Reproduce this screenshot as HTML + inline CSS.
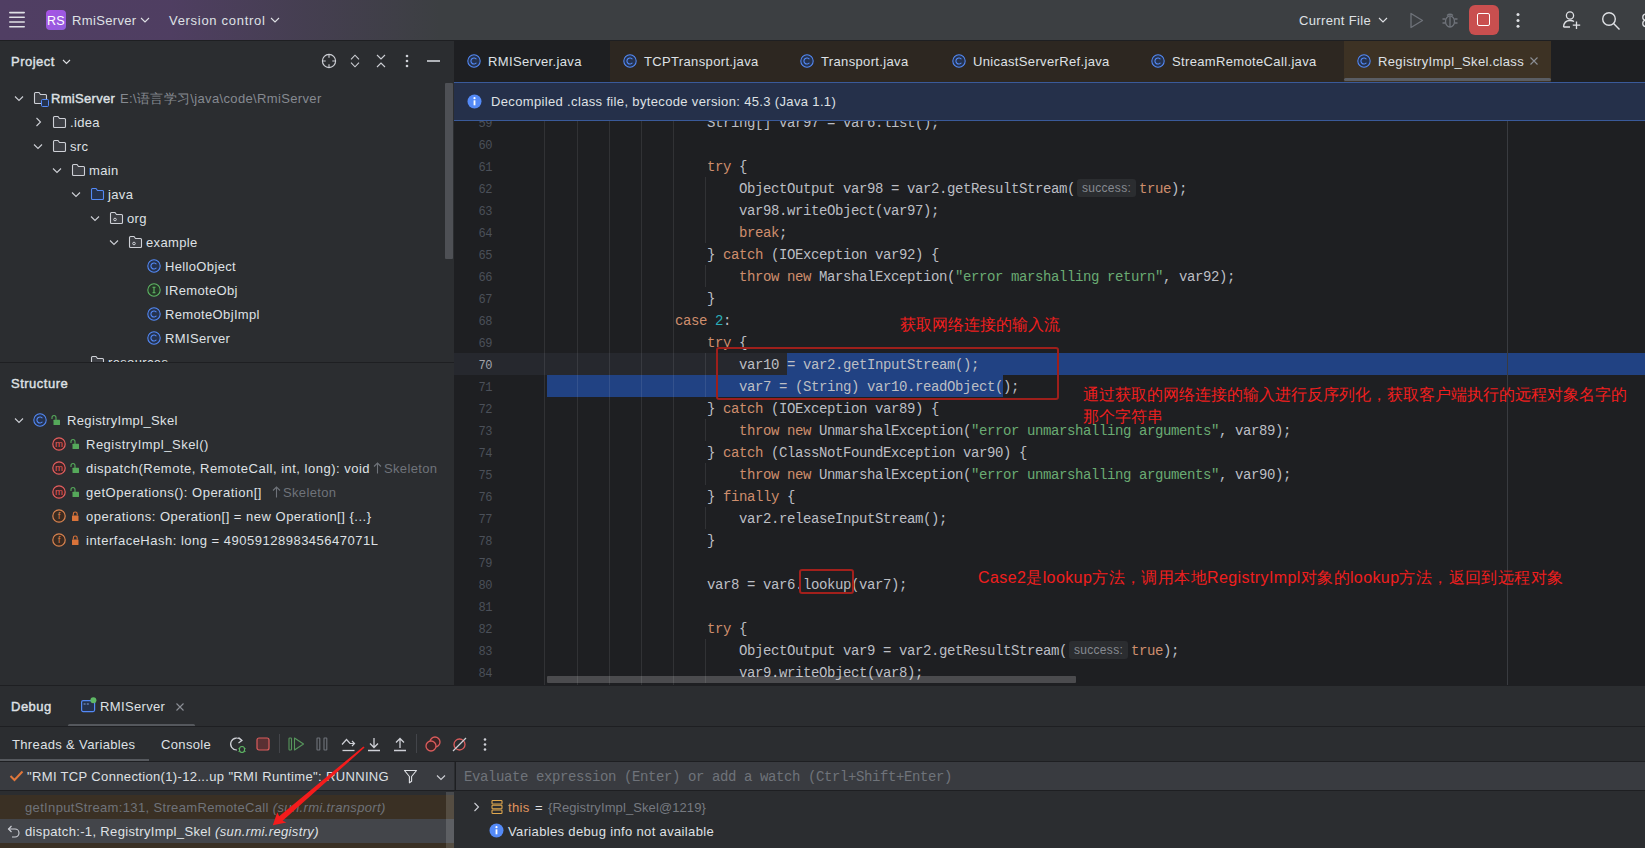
<!DOCTYPE html>
<html><head><meta charset="utf-8"><style>
html,body{margin:0;padding:0;}
body{width:1645px;height:848px;overflow:hidden;position:relative;background:#2b2d30;font-family:"Liberation Sans", sans-serif;}
.t{position:absolute;white-space:pre;font-family:"Liberation Sans", sans-serif;letter-spacing:0.35px}
.m{position:absolute;white-space:pre;font-family:"Liberation Mono", monospace;font-size:14px;letter-spacing:-0.4px}
</style></head><body>
<div style="position:absolute;left:0;top:0;width:1645px;height:40px;background:#3c3f42"></div>
<div style="position:absolute;left:0;top:0;width:900px;height:40px;background:linear-gradient(90deg, rgba(80,62,99,1) 0px, rgba(80,62,99,0.95) 170px, rgba(80,62,99,0.5) 290px, rgba(80,62,99,0) 440px)"></div>
<div style="position:absolute;left:0px;top:40px;width:1645px;height:1px;background:#1e1f22;"></div>
<svg style="position:absolute;left:8px;top:10px;" width="18" height="20" viewBox="0 0 18 20" fill="none"><rect x="1" y="1.8" width="16" height="1.6" rx="0.8" fill="#dfe1e5"/><rect x="1" y="6.5" width="16" height="1.6" rx="0.8" fill="#dfe1e5"/><rect x="1" y="11.2" width="16" height="1.6" rx="0.8" fill="#dfe1e5"/><rect x="1" y="15.9" width="16" height="1.6" rx="0.8" fill="#dfe1e5"/></svg>
<div style="position:absolute;left:46px;top:10px;width:20px;height:20px;border-radius:4px;background:linear-gradient(135deg,#a853e6,#915ddb);"></div>
<div class="t" style="left:46px;top:11.0px;height:20px;line-height:20px;color:#ffffff;font-size:12.5px;font-weight:normal;width:20px;text-align:center;letter-spacing:0.2px">RS</div>
<div class="t" style="left:72px;top:11.0px;height:20px;line-height:20px;color:#dfe1e5;font-size:13px;font-weight:normal;">RmiServer</div>
<svg style="position:absolute;left:140px;top:17.0px;" width="10" height="6" viewBox="0 0 10 6" fill="none"><path d="M1 1 L5 5 L9 1" stroke="#dfe1e5" stroke-width="1.1"/></svg>
<div class="t" style="left:169px;top:11.0px;height:20px;line-height:20px;color:#dfe1e5;font-size:13px;font-weight:normal;letter-spacing:0.7px">Version control</div>
<svg style="position:absolute;left:270px;top:17.0px;" width="10" height="6" viewBox="0 0 10 6" fill="none"><path d="M1 1 L5 5 L9 1" stroke="#dfe1e5" stroke-width="1.1"/></svg>
<div class="t" style="left:1299px;top:11.0px;height:20px;line-height:20px;color:#dfe1e5;font-size:13px;font-weight:normal;">Current File</div>
<svg style="position:absolute;left:1378px;top:17.0px;" width="10" height="6" viewBox="0 0 10 6" fill="none"><path d="M1 1 L5 5 L9 1" stroke="#dfe1e5" stroke-width="1.1"/></svg>
<svg style="position:absolute;left:1408px;top:12px;" width="17" height="17" viewBox="0 0 17 17" fill="none"><path d="M3 1.5 L14.5 8.5 L3 15.5 Z" stroke="#6f737a" stroke-width="1.3" stroke-linejoin="round"/></svg>
<svg style="position:absolute;left:1441px;top:11px;" width="18" height="18" viewBox="0 0 18 18" fill="none"><ellipse cx="9" cy="10.5" rx="4.5" ry="5.5" stroke="#6f737a" stroke-width="1.3"/><path d="M6 4.5 Q9 2 12 4.5 M1.5 8h3 M13.5 8h3 M1.5 12h3 M13.5 12h3 M9 6v10" stroke="#6f737a" stroke-width="1.3"/></svg>
<div style="position:absolute;left:1469px;top:5px;width:30px;height:30px;border-radius:6px;background:#c94f4f"></div>
<div style="position:absolute;left:1477px;top:13px;width:11px;height:11px;border:1.6px solid #ffffff;border-radius:2px"></div>
<svg style="position:absolute;left:1515px;top:12px;" width="6" height="17" viewBox="0 0 6 17" fill="none"><circle cx="3" cy="2.5" r="1.5" fill="#dfe1e5"/><circle cx="3" cy="8.5" r="1.5" fill="#dfe1e5"/><circle cx="3" cy="14.3" r="1.5" fill="#dfe1e5"/></svg>
<svg style="position:absolute;left:1562px;top:10px;" width="20" height="20" viewBox="0 0 20 20" fill="none"><circle cx="8" cy="5.5" r="3.6" stroke="#dfe1e5" stroke-width="1.3"/><path d="M1.5 17 Q2 10.5 8 10.5 Q10.5 10.5 12 11.5" stroke="#dfe1e5" stroke-width="1.3"/><path d="M1.5 17 H8 M14.5 11.5 V19 M10.8 15.2 H18.2" stroke="#dfe1e5" stroke-width="1.3"/></svg>
<svg style="position:absolute;left:1601px;top:11px;" width="20" height="20" viewBox="0 0 20 20" fill="none"><circle cx="8" cy="8" r="6.3" stroke="#dfe1e5" stroke-width="1.4"/><path d="M12.6 12.6 L18.5 18.5" stroke="#dfe1e5" stroke-width="1.4"/></svg>
<svg style="position:absolute;left:1638px;top:8px;" width="8" height="24" viewBox="0 0 8 24" fill="none"><circle cx="8" cy="9.2" r="3.2" stroke="#dfe1e5" stroke-width="1.3"/><circle cx="8" cy="15.5" r="3.2" stroke="#dfe1e5" stroke-width="1.3"/></svg>
<div style="position:absolute;left:0px;top:41px;width:454px;height:644px;background:#2b2d30;"></div>
<div class="t" style="left:11px;top:52.0px;height:20px;line-height:20px;color:#dfe1e5;font-size:13px;font-weight:normal;letter-spacing:0.5px;-webkit-text-stroke:0.4px #dfe1e5">Project</div>
<svg style="position:absolute;left:61.5px;top:59.25px;" width="9.0" height="5.5" viewBox="0 0 9.0 5.5" fill="none"><path d="M1 1 L4.5 4.5 L8.0 1" stroke="#dfe1e5" stroke-width="1.1"/></svg>
<svg style="position:absolute;left:321px;top:53px;" width="16" height="16" viewBox="0 0 16 16" fill="none"><circle cx="8" cy="8" r="6.6" stroke="#ced0d6" stroke-width="1.15"/><path d="M8 1.5v3.2 M8 11.3v3.2 M1.5 8h3.2 M11.3 8h3.2" stroke="#ced0d6" stroke-width="1.1"/></svg>
<svg style="position:absolute;left:349px;top:53px;" width="12" height="16" viewBox="0 0 12 16" fill="none"><path d="M2 6.3 L6 2.2 L10 6.3 M2 9.7 L6 13.8 L10 9.7" stroke="#ced0d6" stroke-width="1.1"/></svg>
<svg style="position:absolute;left:375px;top:53px;" width="12" height="16" viewBox="0 0 12 16" fill="none"><path d="M2 2 L6 6 L10 2 M2 14 L6 10 L10 14" stroke="#ced0d6" stroke-width="1.1"/></svg>
<svg style="position:absolute;left:404px;top:53px;" width="6" height="16" viewBox="0 0 6 16" fill="none"><circle cx="3" cy="3" r="1.3" fill="#ced0d6"/><circle cx="3" cy="8" r="1.3" fill="#ced0d6"/><circle cx="3" cy="13" r="1.3" fill="#ced0d6"/></svg>
<div style="position:absolute;left:427px;top:60.4px;width:12.5px;height:1.3px;background:#b0b3b8;"></div>
<svg style="position:absolute;left:14px;top:95px;" width="10" height="7" viewBox="0 0 10 7" fill="none"><path d="M1 1.5 L5 5.5 L9 1.5" stroke="#ced0d6" stroke-width="1.1"/></svg>
<svg style="position:absolute;left:33px;top:91px;" width="15" height="14" viewBox="0 0 15 14" fill="none"><path d="M1.5 2.5 Q1.5 1.5 2.5 1.5 H6 L7.5 3.5 H12.5 Q13.5 3.5 13.5 4.5 V11.5 Q13.5 12.5 12.5 12.5 H2.5 Q1.5 12.5 1.5 11.5 Z" stroke="#ced0d6" stroke-width="1.1" fill="#3c3e43"/></svg>
<div style="position:absolute;left:41px;top:99px;width:6px;height:6px;border:1.2px solid #548af7;border-radius:1.5px;background:#25324d"></div>
<div class="t" style="left:51px;top:89.0px;height:20px;line-height:20px;color:#dfe1e5;font-size:13px;font-weight:normal;letter-spacing:0.3px;-webkit-text-stroke:0.4px #dfe1e5">RmiServer</div>
<div class="t" style="left:120px;top:89.0px;height:20px;line-height:20px;color:#868a91;font-size:13px;font-weight:normal;">E:\语言学习\java\code\RmiServer</div>
<svg style="position:absolute;left:35px;top:117px;" width="7" height="10" viewBox="0 0 7 10" fill="none"><path d="M1.5 1 L5.5 5 L1.5 9" stroke="#ced0d6" stroke-width="1.1"/></svg>
<svg style="position:absolute;left:52px;top:115px;" width="15" height="14" viewBox="0 0 15 14" fill="none"><path d="M1.5 2.5 Q1.5 1.5 2.5 1.5 H6 L7.5 3.5 H12.5 Q13.5 3.5 13.5 4.5 V11.5 Q13.5 12.5 12.5 12.5 H2.5 Q1.5 12.5 1.5 11.5 Z" stroke="#ced0d6" stroke-width="1.1" fill="#3c3e43"/></svg>
<div class="t" style="left:70px;top:113.0px;height:20px;line-height:20px;color:#dfe1e5;font-size:13px;font-weight:normal;">.idea</div>
<svg style="position:absolute;left:33px;top:143px;" width="10" height="7" viewBox="0 0 10 7" fill="none"><path d="M1 1.5 L5 5.5 L9 1.5" stroke="#ced0d6" stroke-width="1.1"/></svg>
<svg style="position:absolute;left:52px;top:139px;" width="15" height="14" viewBox="0 0 15 14" fill="none"><path d="M1.5 2.5 Q1.5 1.5 2.5 1.5 H6 L7.5 3.5 H12.5 Q13.5 3.5 13.5 4.5 V11.5 Q13.5 12.5 12.5 12.5 H2.5 Q1.5 12.5 1.5 11.5 Z" stroke="#ced0d6" stroke-width="1.1" fill="#3c3e43"/></svg>
<div class="t" style="left:70px;top:137.0px;height:20px;line-height:20px;color:#dfe1e5;font-size:13px;font-weight:normal;">src</div>
<svg style="position:absolute;left:52px;top:167px;" width="10" height="7" viewBox="0 0 10 7" fill="none"><path d="M1 1.5 L5 5.5 L9 1.5" stroke="#ced0d6" stroke-width="1.1"/></svg>
<svg style="position:absolute;left:71px;top:163px;" width="15" height="14" viewBox="0 0 15 14" fill="none"><path d="M1.5 2.5 Q1.5 1.5 2.5 1.5 H6 L7.5 3.5 H12.5 Q13.5 3.5 13.5 4.5 V11.5 Q13.5 12.5 12.5 12.5 H2.5 Q1.5 12.5 1.5 11.5 Z" stroke="#ced0d6" stroke-width="1.1" fill="#3c3e43"/></svg>
<div class="t" style="left:89px;top:161.0px;height:20px;line-height:20px;color:#dfe1e5;font-size:13px;font-weight:normal;">main</div>
<svg style="position:absolute;left:71px;top:191px;" width="10" height="7" viewBox="0 0 10 7" fill="none"><path d="M1 1.5 L5 5.5 L9 1.5" stroke="#ced0d6" stroke-width="1.1"/></svg>
<svg style="position:absolute;left:90px;top:187px;" width="15" height="14" viewBox="0 0 15 14" fill="none"><path d="M1.5 2.5 Q1.5 1.5 2.5 1.5 H6 L7.5 3.5 H12.5 Q13.5 3.5 13.5 4.5 V11.5 Q13.5 12.5 12.5 12.5 H2.5 Q1.5 12.5 1.5 11.5 Z" stroke="#548af7" stroke-width="1.1" fill="#25324d"/></svg>
<div class="t" style="left:108px;top:185.0px;height:20px;line-height:20px;color:#dfe1e5;font-size:13px;font-weight:normal;">java</div>
<svg style="position:absolute;left:90px;top:215px;" width="10" height="7" viewBox="0 0 10 7" fill="none"><path d="M1 1.5 L5 5.5 L9 1.5" stroke="#ced0d6" stroke-width="1.1"/></svg>
<svg style="position:absolute;left:109px;top:211px;" width="15" height="14" viewBox="0 0 15 14" fill="none"><path d="M1.5 2.5 Q1.5 1.5 2.5 1.5 H6 L7.5 3.5 H12.5 Q13.5 3.5 13.5 4.5 V11.5 Q13.5 12.5 12.5 12.5 H2.5 Q1.5 12.5 1.5 11.5 Z" stroke="#ced0d6" stroke-width="1.1" fill="#3c3e43"/><circle cx="6" cy="8.5" r="1.3" stroke="#ced0d6" stroke-width="1"/></svg>
<div class="t" style="left:127px;top:209.0px;height:20px;line-height:20px;color:#dfe1e5;font-size:13px;font-weight:normal;">org</div>
<svg style="position:absolute;left:109px;top:239px;" width="10" height="7" viewBox="0 0 10 7" fill="none"><path d="M1 1.5 L5 5.5 L9 1.5" stroke="#ced0d6" stroke-width="1.1"/></svg>
<svg style="position:absolute;left:128px;top:235px;" width="15" height="14" viewBox="0 0 15 14" fill="none"><path d="M1.5 2.5 Q1.5 1.5 2.5 1.5 H6 L7.5 3.5 H12.5 Q13.5 3.5 13.5 4.5 V11.5 Q13.5 12.5 12.5 12.5 H2.5 Q1.5 12.5 1.5 11.5 Z" stroke="#ced0d6" stroke-width="1.1" fill="#3c3e43"/><circle cx="6" cy="8.5" r="1.3" stroke="#ced0d6" stroke-width="1"/></svg>
<div class="t" style="left:146px;top:233.0px;height:20px;line-height:20px;color:#dfe1e5;font-size:13px;font-weight:normal;">example</div>
<svg style="position:absolute;left:147px;top:259px;" width="14" height="14" viewBox="0 0 14 14" fill="none"><circle cx="7" cy="7" r="6.2" stroke="#548af7" stroke-width="1.05" fill="#25324d"/><path d="M9.4 5.3 A3 3 0 1 0 9.4 8.7" stroke="#548af7" stroke-width="1.1"/></svg>
<div class="t" style="left:165px;top:257.0px;height:20px;line-height:20px;color:#dfe1e5;font-size:13px;font-weight:normal;">HelloObject</div>
<svg style="position:absolute;left:147px;top:283px;" width="14" height="14" viewBox="0 0 14 14" fill="none"><circle cx="7" cy="7" r="6.2" stroke="#5fb865" stroke-width="1.05" fill="#253627"/><path d="M5.5 4.3h3 M7 4.3v5.4 M5.5 9.7h3" stroke="#5fb865" stroke-width="1.1"/></svg>
<div class="t" style="left:165px;top:281.0px;height:20px;line-height:20px;color:#dfe1e5;font-size:13px;font-weight:normal;">IRemoteObj</div>
<svg style="position:absolute;left:147px;top:307px;" width="14" height="14" viewBox="0 0 14 14" fill="none"><circle cx="7" cy="7" r="6.2" stroke="#548af7" stroke-width="1.05" fill="#25324d"/><path d="M9.4 5.3 A3 3 0 1 0 9.4 8.7" stroke="#548af7" stroke-width="1.1"/></svg>
<div class="t" style="left:165px;top:305.0px;height:20px;line-height:20px;color:#dfe1e5;font-size:13px;font-weight:normal;">RemoteObjImpl</div>
<svg style="position:absolute;left:147px;top:331px;" width="14" height="14" viewBox="0 0 14 14" fill="none"><circle cx="7" cy="7" r="6.2" stroke="#548af7" stroke-width="1.05" fill="#25324d"/><path d="M9.4 5.3 A3 3 0 1 0 9.4 8.7" stroke="#548af7" stroke-width="1.1"/></svg>
<div class="t" style="left:165px;top:329.0px;height:20px;line-height:20px;color:#dfe1e5;font-size:13px;font-weight:normal;">RMIServer</div>
<svg style="position:absolute;left:90px;top:355px;" width="15" height="14" viewBox="0 0 15 14" fill="none"><path d="M1.5 2.5 Q1.5 1.5 2.5 1.5 H6 L7.5 3.5 H12.5 Q13.5 3.5 13.5 4.5 V11.5 Q13.5 12.5 12.5 12.5 H2.5 Q1.5 12.5 1.5 11.5 Z" stroke="#ced0d6" stroke-width="1.1" fill="#3c3e43"/></svg>
<div class="t" style="left:108px;top:353.0px;height:20px;line-height:20px;color:#dfe1e5;font-size:13px;font-weight:normal;">resources</div>
<div style="position:absolute;left:0px;top:362px;width:454px;height:1px;background:#1e1f22;"></div>
<div style="position:absolute;left:0px;top:363px;width:454px;height:322px;background:#2b2d30;"></div>
<div style="position:absolute;left:445px;top:83px;width:8px;height:176px;background:#4e5055;border-radius:1px"></div>
<div class="t" style="left:11px;top:374.0px;height:20px;line-height:20px;color:#dfe1e5;font-size:13px;font-weight:normal;letter-spacing:0.5px;-webkit-text-stroke:0.4px #dfe1e5">Structure</div>
<svg style="position:absolute;left:14px;top:417px;" width="10" height="7" viewBox="0 0 10 7" fill="none"><path d="M1 1.5 L5 5.5 L9 1.5" stroke="#ced0d6" stroke-width="1.1"/></svg>
<svg style="position:absolute;left:33px;top:413px;" width="14" height="14" viewBox="0 0 14 14" fill="none"><circle cx="7" cy="7" r="6.2" stroke="#548af7" stroke-width="1.05" fill="#25324d"/><path d="M9.4 5.3 A3 3 0 1 0 9.4 8.7" stroke="#548af7" stroke-width="1.1"/></svg>
<svg style="position:absolute;left:51px;top:414px;" width="10" height="12" viewBox="0 0 10 12" fill="none"><rect x="2.5" y="5.8" width="6.5" height="5.2" rx="0.5" fill="#55a85a"/><path d="M1 5 V3.6 Q1 1.5 3 1.5 Q5 1.5 5 3.6 V6" stroke="#55a85a" stroke-width="1.1"/></svg>
<div class="t" style="left:67px;top:411.0px;height:20px;line-height:20px;color:#dfe1e5;font-size:13px;font-weight:normal;">RegistryImpl_Skel</div>
<svg style="position:absolute;left:52px;top:437px;" width="14" height="14" viewBox="0 0 14 14" fill="none"><circle cx="7" cy="7" r="6.2" stroke="#e55f5f" stroke-width="1.2" fill="#3b2325"/><text x="7" y="10" text-anchor="middle" font-family="Liberation Sans" font-size="9.5" fill="#e55f5f">m</text></svg>
<svg style="position:absolute;left:70px;top:438px;" width="10" height="12" viewBox="0 0 10 12" fill="none"><rect x="2.5" y="5.8" width="6.5" height="5.2" rx="0.5" fill="#55a85a"/><path d="M1 5 V3.6 Q1 1.5 3 1.5 Q5 1.5 5 3.6 V6" stroke="#55a85a" stroke-width="1.1"/></svg>
<div class="t" style="left:86px;top:435.0px;height:20px;line-height:20px;color:#dfe1e5;font-size:13px;font-weight:normal;letter-spacing:0.5px">RegistryImpl_Skel()</div>
<svg style="position:absolute;left:52px;top:461px;" width="14" height="14" viewBox="0 0 14 14" fill="none"><circle cx="7" cy="7" r="6.2" stroke="#e55f5f" stroke-width="1.2" fill="#3b2325"/><text x="7" y="10" text-anchor="middle" font-family="Liberation Sans" font-size="9.5" fill="#e55f5f">m</text></svg>
<svg style="position:absolute;left:70px;top:462px;" width="10" height="12" viewBox="0 0 10 12" fill="none"><rect x="2.5" y="5.8" width="6.5" height="5.2" rx="0.5" fill="#55a85a"/><path d="M1 5 V3.6 Q1 1.5 3 1.5 Q5 1.5 5 3.6 V6" stroke="#55a85a" stroke-width="1.1"/></svg>
<div class="t" style="left:86px;top:459.0px;height:20px;line-height:20px;color:#dfe1e5;font-size:13px;font-weight:normal;letter-spacing:0.5px">dispatch(Remote, RemoteCall, int, long): void</div>
<svg style="position:absolute;left:373px;top:461px;" width="9" height="14" viewBox="0 0 9 14" fill="none"><path d="M4.5 12.5 V2 M1 5.5 L4.5 2 L8 5.5" stroke="#6f737a" stroke-width="1.1"/></svg>
<div class="t" style="left:384px;top:459.0px;height:20px;line-height:20px;color:#6f737a;font-size:13px;font-weight:normal;">Skeleton</div>
<svg style="position:absolute;left:52px;top:485px;" width="14" height="14" viewBox="0 0 14 14" fill="none"><circle cx="7" cy="7" r="6.2" stroke="#e55f5f" stroke-width="1.2" fill="#3b2325"/><text x="7" y="10" text-anchor="middle" font-family="Liberation Sans" font-size="9.5" fill="#e55f5f">m</text></svg>
<svg style="position:absolute;left:70px;top:486px;" width="10" height="12" viewBox="0 0 10 12" fill="none"><rect x="2.5" y="5.8" width="6.5" height="5.2" rx="0.5" fill="#55a85a"/><path d="M1 5 V3.6 Q1 1.5 3 1.5 Q5 1.5 5 3.6 V6" stroke="#55a85a" stroke-width="1.1"/></svg>
<div class="t" style="left:86px;top:483.0px;height:20px;line-height:20px;color:#dfe1e5;font-size:13px;font-weight:normal;letter-spacing:0.5px">getOperations(): Operation[]</div>
<svg style="position:absolute;left:272px;top:485px;" width="9" height="14" viewBox="0 0 9 14" fill="none"><path d="M4.5 12.5 V2 M1 5.5 L4.5 2 L8 5.5" stroke="#6f737a" stroke-width="1.1"/></svg>
<div class="t" style="left:283px;top:483.0px;height:20px;line-height:20px;color:#6f737a;font-size:13px;font-weight:normal;">Skeleton</div>
<svg style="position:absolute;left:52px;top:509px;" width="14" height="14" viewBox="0 0 14 14" fill="none"><circle cx="7" cy="7" r="6.2" stroke="#d8834f" stroke-width="1.2" fill="#3a2a20"/><text x="7" y="10" text-anchor="middle" font-family="Liberation Sans" font-size="9.5" fill="#d8834f">f</text></svg>
<svg style="position:absolute;left:70px;top:510px;" width="10" height="12" viewBox="0 0 10 12" fill="none"><rect x="2" y="5.6" width="6.5" height="5.4" rx="0.5" fill="#d9733a"/><path d="M3.3 5.6 V3.9 Q3.3 2 5.25 2 Q7.2 2 7.2 3.9 V5.6" stroke="#d9733a" stroke-width="1.1"/></svg>
<div class="t" style="left:86px;top:507.0px;height:20px;line-height:20px;color:#dfe1e5;font-size:13px;font-weight:normal;letter-spacing:0.5px">operations: Operation[] = new Operation[] {...}</div>
<svg style="position:absolute;left:52px;top:533px;" width="14" height="14" viewBox="0 0 14 14" fill="none"><circle cx="7" cy="7" r="6.2" stroke="#d8834f" stroke-width="1.2" fill="#3a2a20"/><text x="7" y="10" text-anchor="middle" font-family="Liberation Sans" font-size="9.5" fill="#d8834f">f</text></svg>
<svg style="position:absolute;left:70px;top:534px;" width="10" height="12" viewBox="0 0 10 12" fill="none"><rect x="2" y="5.6" width="6.5" height="5.4" rx="0.5" fill="#d9733a"/><path d="M3.3 5.6 V3.9 Q3.3 2 5.25 2 Q7.2 2 7.2 3.9 V5.6" stroke="#d9733a" stroke-width="1.1"/></svg>
<div class="t" style="left:86px;top:531.0px;height:20px;line-height:20px;color:#dfe1e5;font-size:13px;font-weight:normal;letter-spacing:0.5px">interfaceHash: long = 4905912898345647071L</div>
<div style="position:absolute;left:454px;top:41px;width:1191px;height:41px;background:#1e1f22;"></div>
<div style="position:absolute;left:454px;top:41px;width:156px;height:41px;background:#1e1f22;"></div>
<svg style="position:absolute;left:466.5px;top:54px;" width="14" height="14" viewBox="0 0 14 14" fill="none"><circle cx="7" cy="7" r="6.2" stroke="#548af7" stroke-width="1.05" fill="#25324d"/><path d="M9.4 5.3 A3 3 0 1 0 9.4 8.7" stroke="#548af7" stroke-width="1.1"/></svg>
<div class="t" style="left:488px;top:52.0px;height:20px;line-height:20px;color:#dfe1e5;font-size:13px;font-weight:normal;">RMIServer.java</div>
<div style="position:absolute;left:610px;top:41px;width:177px;height:41px;background:#2d2721;"></div>
<svg style="position:absolute;left:622.5px;top:54px;" width="14" height="14" viewBox="0 0 14 14" fill="none"><circle cx="7" cy="7" r="6.2" stroke="#548af7" stroke-width="1.05" fill="#25324d"/><path d="M9.4 5.3 A3 3 0 1 0 9.4 8.7" stroke="#548af7" stroke-width="1.1"/></svg>
<div class="t" style="left:644px;top:52.0px;height:20px;line-height:20px;color:#dfe1e5;font-size:13px;font-weight:normal;">TCPTransport.java</div>
<div style="position:absolute;left:787px;top:41px;width:152px;height:41px;background:#2d2721;"></div>
<svg style="position:absolute;left:799.5px;top:54px;" width="14" height="14" viewBox="0 0 14 14" fill="none"><circle cx="7" cy="7" r="6.2" stroke="#548af7" stroke-width="1.05" fill="#25324d"/><path d="M9.4 5.3 A3 3 0 1 0 9.4 8.7" stroke="#548af7" stroke-width="1.1"/></svg>
<div class="t" style="left:821px;top:52.0px;height:20px;line-height:20px;color:#dfe1e5;font-size:13px;font-weight:normal;">Transport.java</div>
<div style="position:absolute;left:939px;top:41px;width:199px;height:41px;background:#2d2721;"></div>
<svg style="position:absolute;left:951.5px;top:54px;" width="14" height="14" viewBox="0 0 14 14" fill="none"><circle cx="7" cy="7" r="6.2" stroke="#548af7" stroke-width="1.05" fill="#25324d"/><path d="M9.4 5.3 A3 3 0 1 0 9.4 8.7" stroke="#548af7" stroke-width="1.1"/></svg>
<div class="t" style="left:973px;top:52.0px;height:20px;line-height:20px;color:#dfe1e5;font-size:13px;font-weight:normal;">UnicastServerRef.java</div>
<div style="position:absolute;left:1138px;top:41px;width:206px;height:41px;background:#2d2721;"></div>
<svg style="position:absolute;left:1150.5px;top:54px;" width="14" height="14" viewBox="0 0 14 14" fill="none"><circle cx="7" cy="7" r="6.2" stroke="#548af7" stroke-width="1.05" fill="#25324d"/><path d="M9.4 5.3 A3 3 0 1 0 9.4 8.7" stroke="#548af7" stroke-width="1.1"/></svg>
<div class="t" style="left:1172px;top:52.0px;height:20px;line-height:20px;color:#dfe1e5;font-size:13px;font-weight:normal;">StreamRemoteCall.java</div>
<div style="position:absolute;left:1344px;top:41px;width:207px;height:41px;background:#3d3224;"></div>
<svg style="position:absolute;left:1356.5px;top:54px;" width="14" height="14" viewBox="0 0 14 14" fill="none"><circle cx="7" cy="7" r="6.2" stroke="#548af7" stroke-width="1.05" fill="#25324d"/><path d="M9.4 5.3 A3 3 0 1 0 9.4 8.7" stroke="#548af7" stroke-width="1.1"/></svg>
<div class="t" style="left:1378px;top:52.0px;height:20px;line-height:20px;color:#dfe1e5;font-size:13px;font-weight:normal;">RegistryImpl_Skel.class</div>
<div style="position:absolute;left:1344px;top:78px;width:207px;height:3px;background:#5a5d63;border-radius:1.5px"></div>
<svg style="position:absolute;left:1529px;top:56px;" width="10" height="10" viewBox="0 0 10 10" fill="none"><path d="M1.5 1.5 L8.5 8.5 M8.5 1.5 L1.5 8.5" stroke="#8c8f96" stroke-width="1.1"/></svg>
<div style="position:absolute;left:454px;top:82px;width:1191px;height:39px;background:#25304a;"></div>
<div style="position:absolute;left:454px;top:82px;width:1191px;height:1px;background:#3a5a9a;"></div>
<div style="position:absolute;left:454px;top:120px;width:1191px;height:1px;background:#3a5a9a;"></div>
<svg style="position:absolute;left:467px;top:94px;" width="15" height="15" viewBox="0 0 15 15" fill="none"><circle cx="7.5" cy="7.5" r="7" fill="#548af7"/><rect x="6.6" y="6.3" width="1.8" height="5" fill="#fff"/><circle cx="7.5" cy="4.2" r="1.1" fill="#fff"/></svg>
<div class="t" style="left:491px;top:92.0px;height:20px;line-height:20px;color:#dfe1e5;font-size:13px;font-weight:normal;">Decompiled .class file, bytecode version: 45.3 (Java 1.1)</div>
<div style="position:absolute;left:454px;top:121px;width:1191px;height:564px;background:#1e1f22;"></div>
<div style="position:absolute;left:454px;top:121px;width:1191px;height:564px;overflow:hidden">
<div style="position:absolute;left:0px;top:232px;width:1191px;height:22px;background:#26282e;"></div>
<div style="position:absolute;left:333px;top:232px;width:858px;height:22px;background:#214283;"></div>
<div style="position:absolute;left:93px;top:254px;width:456px;height:22px;background:#214283;"></div>
<div style="position:absolute;left:90px;top:0px;width:1px;height:564px;background:rgba(255,255,255,0.085);"></div>
<div style="position:absolute;left:123px;top:0px;width:1px;height:564px;background:rgba(255,255,255,0.085);"></div>
<div style="position:absolute;left:155px;top:0px;width:1px;height:564px;background:rgba(255,255,255,0.085);"></div>
<div style="position:absolute;left:187px;top:0px;width:1px;height:564px;background:rgba(255,255,255,0.085);"></div>
<div style="position:absolute;left:219px;top:0px;width:1px;height:564px;background:rgba(255,255,255,0.085);"></div>
<div style="position:absolute;left:251px;top:56px;width:1px;height:66px;background:rgba(255,255,255,0.085);"></div>
<div style="position:absolute;left:251px;top:144px;width:1px;height:22px;background:rgba(255,255,255,0.085);"></div>
<div style="position:absolute;left:251px;top:232px;width:1px;height:44px;background:rgba(255,255,255,0.085);"></div>
<div style="position:absolute;left:251px;top:298px;width:1px;height:22px;background:rgba(255,255,255,0.085);"></div>
<div style="position:absolute;left:251px;top:342px;width:1px;height:22px;background:rgba(255,255,255,0.085);"></div>
<div style="position:absolute;left:251px;top:386px;width:1px;height:22px;background:rgba(255,255,255,0.085);"></div>
<div style="position:absolute;left:251px;top:518px;width:1px;height:44px;background:rgba(255,255,255,0.085);"></div>
<div style="position:absolute;left:1053px;top:0px;width:1px;height:564px;background:#393b40;"></div>
<div class="m" style="left:8px;width:30px;text-align:right;top:-8px;height:22px;line-height:22px;font-size:12px;color:#4b5059">59</div>
<div class="m" style="left:8px;width:30px;text-align:right;top:14px;height:22px;line-height:22px;font-size:12px;color:#4b5059">60</div>
<div class="m" style="left:8px;width:30px;text-align:right;top:36px;height:22px;line-height:22px;font-size:12px;color:#4b5059">61</div>
<div class="m" style="left:8px;width:30px;text-align:right;top:58px;height:22px;line-height:22px;font-size:12px;color:#4b5059">62</div>
<div class="m" style="left:8px;width:30px;text-align:right;top:80px;height:22px;line-height:22px;font-size:12px;color:#4b5059">63</div>
<div class="m" style="left:8px;width:30px;text-align:right;top:102px;height:22px;line-height:22px;font-size:12px;color:#4b5059">64</div>
<div class="m" style="left:8px;width:30px;text-align:right;top:124px;height:22px;line-height:22px;font-size:12px;color:#4b5059">65</div>
<div class="m" style="left:8px;width:30px;text-align:right;top:146px;height:22px;line-height:22px;font-size:12px;color:#4b5059">66</div>
<div class="m" style="left:8px;width:30px;text-align:right;top:168px;height:22px;line-height:22px;font-size:12px;color:#4b5059">67</div>
<div class="m" style="left:8px;width:30px;text-align:right;top:190px;height:22px;line-height:22px;font-size:12px;color:#4b5059">68</div>
<div class="m" style="left:8px;width:30px;text-align:right;top:212px;height:22px;line-height:22px;font-size:12px;color:#4b5059">69</div>
<div class="m" style="left:8px;width:30px;text-align:right;top:234px;height:22px;line-height:22px;font-size:12px;color:#a1a3ab">70</div>
<div class="m" style="left:8px;width:30px;text-align:right;top:256px;height:22px;line-height:22px;font-size:12px;color:#4b5059">71</div>
<div class="m" style="left:8px;width:30px;text-align:right;top:278px;height:22px;line-height:22px;font-size:12px;color:#4b5059">72</div>
<div class="m" style="left:8px;width:30px;text-align:right;top:300px;height:22px;line-height:22px;font-size:12px;color:#4b5059">73</div>
<div class="m" style="left:8px;width:30px;text-align:right;top:322px;height:22px;line-height:22px;font-size:12px;color:#4b5059">74</div>
<div class="m" style="left:8px;width:30px;text-align:right;top:344px;height:22px;line-height:22px;font-size:12px;color:#4b5059">75</div>
<div class="m" style="left:8px;width:30px;text-align:right;top:366px;height:22px;line-height:22px;font-size:12px;color:#4b5059">76</div>
<div class="m" style="left:8px;width:30px;text-align:right;top:388px;height:22px;line-height:22px;font-size:12px;color:#4b5059">77</div>
<div class="m" style="left:8px;width:30px;text-align:right;top:410px;height:22px;line-height:22px;font-size:12px;color:#4b5059">78</div>
<div class="m" style="left:8px;width:30px;text-align:right;top:432px;height:22px;line-height:22px;font-size:12px;color:#4b5059">79</div>
<div class="m" style="left:8px;width:30px;text-align:right;top:454px;height:22px;line-height:22px;font-size:12px;color:#4b5059">80</div>
<div class="m" style="left:8px;width:30px;text-align:right;top:476px;height:22px;line-height:22px;font-size:12px;color:#4b5059">81</div>
<div class="m" style="left:8px;width:30px;text-align:right;top:498px;height:22px;line-height:22px;font-size:12px;color:#4b5059">82</div>
<div class="m" style="left:8px;width:30px;text-align:right;top:520px;height:22px;line-height:22px;font-size:12px;color:#4b5059">83</div>
<div class="m" style="left:8px;width:30px;text-align:right;top:542px;height:22px;line-height:22px;font-size:12px;color:#4b5059">84</div>
<div class="m" style="left:253px;top:-9px;height:22px;line-height:22px"><span style="color:#bcbec4">String[] var97 = var6.list();</span></div>
<div class="m" style="left:253px;top:35px;height:22px;line-height:22px"><span style="color:#cf8e6d">try</span><span style="color:#bcbec4"> {</span></div>
<div class="m" style="left:285px;top:57px;height:22px;line-height:22px"><span style="color:#bcbec4">ObjectOutput var98 = var2.getResultStream(</span></div>
<div style="position:absolute;left:623px;top:58px;width:59px;height:18px;background:#2b2d30;border-radius:3px"></div>
<div class="t" style="left:628px;top:57px;height:20px;line-height:20px;color:#868a91;font-size:12px;letter-spacing:0.3px">success:</div>
<div class="m" style="left:685px;top:57px;height:22px;line-height:22px"><span style="color:#cf8e6d">true</span><span style="color:#bcbec4">);</span></div>
<div class="m" style="left:285px;top:79px;height:22px;line-height:22px"><span style="color:#bcbec4">var98.writeObject(var97);</span></div>
<div class="m" style="left:285px;top:101px;height:22px;line-height:22px"><span style="color:#cf8e6d">break</span><span style="color:#bcbec4">;</span></div>
<div class="m" style="left:253px;top:123px;height:22px;line-height:22px"><span style="color:#bcbec4">} </span><span style="color:#cf8e6d">catch</span><span style="color:#bcbec4"> (IOException var92) {</span></div>
<div class="m" style="left:285px;top:145px;height:22px;line-height:22px"><span style="color:#cf8e6d">throw new</span><span style="color:#bcbec4"> MarshalException(</span><span style="color:#6aab73">&quot;error marshalling return&quot;</span><span style="color:#bcbec4">, var92);</span></div>
<div class="m" style="left:253px;top:167px;height:22px;line-height:22px"><span style="color:#bcbec4">}</span></div>
<div class="m" style="left:221px;top:189px;height:22px;line-height:22px"><span style="color:#cf8e6d">case</span><span style="color:#bcbec4"> </span><span style="color:#2aacb8">2</span><span style="color:#bcbec4">:</span></div>
<div class="m" style="left:253px;top:211px;height:22px;line-height:22px"><span style="color:#cf8e6d">try</span><span style="color:#bcbec4"> {</span></div>
<div class="m" style="left:285px;top:233px;height:22px;line-height:22px"><span style="color:#bcbec4">var10 = var2.getInputStream();</span></div>
<div class="m" style="left:285px;top:255px;height:22px;line-height:22px"><span style="color:#bcbec4">var7 = (String) var10.readObject();</span></div>
<div class="m" style="left:253px;top:277px;height:22px;line-height:22px"><span style="color:#bcbec4">} </span><span style="color:#cf8e6d">catch</span><span style="color:#bcbec4"> (IOException var89) {</span></div>
<div class="m" style="left:285px;top:299px;height:22px;line-height:22px"><span style="color:#cf8e6d">throw new</span><span style="color:#bcbec4"> UnmarshalException(</span><span style="color:#6aab73">&quot;error unmarshalling arguments&quot;</span><span style="color:#bcbec4">, var89);</span></div>
<div class="m" style="left:253px;top:321px;height:22px;line-height:22px"><span style="color:#bcbec4">} </span><span style="color:#cf8e6d">catch</span><span style="color:#bcbec4"> (ClassNotFoundException var90) {</span></div>
<div class="m" style="left:285px;top:343px;height:22px;line-height:22px"><span style="color:#cf8e6d">throw new</span><span style="color:#bcbec4"> UnmarshalException(</span><span style="color:#6aab73">&quot;error unmarshalling arguments&quot;</span><span style="color:#bcbec4">, var90);</span></div>
<div class="m" style="left:253px;top:365px;height:22px;line-height:22px"><span style="color:#bcbec4">} </span><span style="color:#cf8e6d">finally</span><span style="color:#bcbec4"> {</span></div>
<div class="m" style="left:285px;top:387px;height:22px;line-height:22px"><span style="color:#bcbec4">var2.releaseInputStream();</span></div>
<div class="m" style="left:253px;top:409px;height:22px;line-height:22px"><span style="color:#bcbec4">}</span></div>
<div class="m" style="left:253px;top:453px;height:22px;line-height:22px"><span style="color:#bcbec4">var8 = var6.lookup(var7);</span></div>
<div class="m" style="left:253px;top:497px;height:22px;line-height:22px"><span style="color:#cf8e6d">try</span><span style="color:#bcbec4"> {</span></div>
<div class="m" style="left:285px;top:519px;height:22px;line-height:22px"><span style="color:#bcbec4">ObjectOutput var9 = var2.getResultStream(</span></div>
<div style="position:absolute;left:615px;top:520px;width:59px;height:18px;background:#2b2d30;border-radius:3px"></div>
<div class="t" style="left:620px;top:519px;height:20px;line-height:20px;color:#868a91;font-size:12px;letter-spacing:0.3px">success:</div>
<div class="m" style="left:677px;top:519px;height:22px;line-height:22px"><span style="color:#cf8e6d">true</span><span style="color:#bcbec4">);</span></div>
<div class="m" style="left:285px;top:541px;height:22px;line-height:22px"><span style="color:#bcbec4">var9.writeObject(var8);</span></div>
<div style="position:absolute;left:93px;top:555px;width:529px;height:7px;background:rgba(255,255,255,0.2);border-radius:1px"></div>
<div style="position:absolute;white-space:pre;left:446px;top:192px;height:24px;line-height:24px;color:#f01e1e;font-size:16px;letter-spacing:0px;font-family:'Liberation Sans', sans-serif">获取网络连接的输入流</div>
<div style="position:absolute;white-space:pre;left:629px;top:262px;height:24px;line-height:24px;color:#f01e1e;font-size:16px;letter-spacing:0px;font-family:'Liberation Sans', sans-serif">通过获取的网络连接的输入进行反序列化，获取客户端执行的远程对象名字的</div>
<div style="position:absolute;white-space:pre;left:629px;top:284px;height:24px;line-height:24px;color:#f01e1e;font-size:16px;letter-spacing:0px;font-family:'Liberation Sans', sans-serif">那个字符串</div>
<div style="position:absolute;white-space:pre;left:524px;top:445px;height:24px;line-height:24px;color:#f01e1e;font-size:16px;letter-spacing:0.4px;font-family:'Liberation Sans', sans-serif">Case2是lookup方法，调用本地RegistryImpl对象的lookup方法，返回到远程对象</div>
<div style="position:absolute;left:262px;top:226px;width:343px;height:53px;background:transparent;border:2px solid #9e1f1b;border-radius:3px;box-sizing:border-box"></div>
<div style="position:absolute;left:345px;top:448px;width:55px;height:25px;background:transparent;border:2px solid #a3201c;border-radius:3px;box-sizing:border-box"></div>
</div>
<div style="position:absolute;left:0px;top:685px;width:1645px;height:163px;background:#2b2d30;"></div>
<div style="position:absolute;left:0px;top:685px;width:1645px;height:1px;background:#1e1f22;"></div>
<div class="t" style="left:11px;top:697.0px;height:20px;line-height:20px;color:#dfe1e5;font-size:13px;font-weight:normal;letter-spacing:0.5px;-webkit-text-stroke:0.4px #dfe1e5">Debug</div>
<svg style="position:absolute;left:80px;top:697px;" width="18" height="16" viewBox="0 0 18 16" fill="none"><rect x="1.6" y="3.6" width="13" height="11" rx="1.5" stroke="#548af7" stroke-width="1.2" fill="#25324d"/><path d="M3.6 7h2 M6.8 7h2" stroke="#8ab0f7" stroke-width="0.9"/><circle cx="13.4" cy="3.2" r="3" fill="#5fb865"/></svg>
<div class="t" style="left:100px;top:697.0px;height:20px;line-height:20px;color:#dfe1e5;font-size:13px;font-weight:normal;">RMIServer</div>
<svg style="position:absolute;left:175px;top:702px;" width="10" height="10" viewBox="0 0 10 10" fill="none"><path d="M1.5 1.5 L8.5 8.5 M8.5 1.5 L1.5 8.5" stroke="#8c8f96" stroke-width="1.1"/></svg>
<div style="position:absolute;left:68px;top:724px;width:127px;height:3px;background:#55585d;border-radius:1.5px"></div>
<div style="position:absolute;left:0px;top:726px;width:1645px;height:1px;background:#1e1f22;"></div>
<div class="t" style="left:12px;top:735.0px;height:20px;line-height:20px;color:#dfe1e5;font-size:13px;font-weight:normal;">Threads &amp; Variables</div>
<div class="t" style="left:161px;top:735.0px;height:20px;line-height:20px;color:#dfe1e5;font-size:13px;font-weight:normal;">Console</div>
<div style="position:absolute;left:0px;top:759px;width:149px;height:2px;background:#55585d;"></div>
<div style="position:absolute;left:0px;top:761px;width:1645px;height:1px;background:#1e1f22;"></div>
<svg style="position:absolute;left:229px;top:736px;" width="18" height="18" viewBox="0 0 18 18" fill="none"><path d="M12.5 4.5 A6 6 0 1 0 8 14" stroke="#ced0d6" stroke-width="1.2"/><path d="M9.5 1.5 L13 4.5 L9.5 7" stroke="#ced0d6" stroke-width="1.2"/><ellipse cx="13" cy="13.5" rx="2.6" ry="3" stroke="#5fb865" stroke-width="1.1"/><path d="M9.5 12.5h1 M15.5 12.5h1 M9.5 15.5h1 M15.5 15.5h1" stroke="#5fb865" stroke-width="1"/></svg>
<svg style="position:absolute;left:256px;top:737px;" width="14" height="14" viewBox="0 0 14 14" fill="none"><rect x="1" y="1" width="12" height="12" rx="2" stroke="#db5c5c" stroke-width="1.2" fill="#5a3033"/></svg>
<div style="position:absolute;left:279px;top:734px;width:1px;height:19px;background:#43454a;"></div>
<svg style="position:absolute;left:288px;top:737px;" width="17" height="14" viewBox="0 0 17 14" fill="none"><rect x="1" y="1" width="2.5" height="12" rx="0.8" stroke="#57965c" stroke-width="1.1"/><path d="M6.5 1 L15.5 7 L6.5 13 Z" stroke="#57965c" stroke-width="1.1" stroke-linejoin="round"/></svg>
<svg style="position:absolute;left:316px;top:737px;" width="12" height="14" viewBox="0 0 12 14" fill="none"><rect x="1" y="1" width="2.8" height="12" rx="0.5" stroke="#6f737a" stroke-width="1.1"/><rect x="8" y="1" width="2.8" height="12" rx="0.5" stroke="#6f737a" stroke-width="1.1"/></svg>
<svg style="position:absolute;left:341px;top:737px;" width="15" height="15" viewBox="0 0 15 15" fill="none"><path d="M1 7.5 L5.5 2.5 L9 6.5 L13.5 6.5 M11 4 L13.5 6.5 L11 9" stroke="#ced0d6" stroke-width="1.2"/><path d="M1.5 13.5h12" stroke="#ced0d6" stroke-width="1.3"/></svg>
<svg style="position:absolute;left:367px;top:737px;" width="14" height="15" viewBox="0 0 14 15" fill="none"><path d="M7 1v9 M3 6.5 L7 10.5 L11 6.5 M1 13.5h12" stroke="#ced0d6" stroke-width="1.3"/></svg>
<svg style="position:absolute;left:393px;top:737px;" width="14" height="15" viewBox="0 0 14 15" fill="none"><path d="M7 11V2 M3 5.5 L7 1.5 L11 5.5 M1 13.5h12" stroke="#ced0d6" stroke-width="1.3"/></svg>
<div style="position:absolute;left:416px;top:734px;width:1px;height:19px;background:#43454a;"></div>
<svg style="position:absolute;left:425px;top:736px;" width="16" height="16" viewBox="0 0 16 16" fill="none"><circle cx="10" cy="6" r="5" stroke="#db5c5c" stroke-width="1.3" fill="#3b2325"/><circle cx="6" cy="10" r="5" stroke="#db5c5c" stroke-width="1.3" fill="#3b2325"/></svg>
<svg style="position:absolute;left:452px;top:737px;" width="15" height="15" viewBox="0 0 15 15" fill="none"><circle cx="7.5" cy="7.5" r="5.5" stroke="#db5c5c" stroke-width="1.3"/><path d="M1 14 L14 1" stroke="#ced0d6" stroke-width="1.3"/></svg>
<svg style="position:absolute;left:482px;top:737px;" width="6" height="15" viewBox="0 0 6 15" fill="none"><circle cx="3" cy="2.5" r="1.3" fill="#ced0d6"/><circle cx="3" cy="7.5" r="1.3" fill="#ced0d6"/><circle cx="3" cy="12.5" r="1.3" fill="#ced0d6"/></svg>
<div style="position:absolute;left:0px;top:762px;width:454px;height:28px;background:#393b40;"></div>
<svg style="position:absolute;left:9px;top:770px;" width="15" height="12" viewBox="0 0 15 12" fill="none"><path d="M1.5 6 L5.5 10 L13.5 1.5" stroke="#e0773b" stroke-width="2"/></svg>
<div class="t" style="left:27px;top:767.0px;height:20px;line-height:20px;color:#dfe1e5;font-size:13px;font-weight:normal;">&quot;RMI TCP Connection(1)-12...up &quot;RMI Runtime&quot;: RUNNING</div>
<svg style="position:absolute;left:403px;top:769px;" width="15" height="15" viewBox="0 0 15 15" fill="none"><path d="M1.5 1.5 H13.5 L8.6 7.5 V12.2 L6.4 13.8 V7.5 Z" stroke="#dfe1e5" stroke-width="1.1" stroke-linejoin="round"/></svg>
<svg style="position:absolute;left:436px;top:773.5px;" width="10" height="7" viewBox="0 0 10 7" fill="none"><path d="M1 1.5 L5 5.5 L9 1.5" stroke="#ced0d6" stroke-width="1.1"/></svg>
<div style="position:absolute;left:455px;top:762px;width:1px;height:28px;background:#1e1f22;"></div>
<div style="position:absolute;left:456px;top:762px;width:1189px;height:28px;background:#393b40;"></div>
<div class="m" style="left:464px;top:766px;height:22px;line-height:22px;color:#6f737a">Evaluate expression (Enter) or add a watch (Ctrl+Shift+Enter)</div>
<div style="position:absolute;left:0px;top:790px;width:1645px;height:1px;background:#1e1f22;"></div>
<div style="position:absolute;left:0px;top:795px;width:454px;height:24px;background:#3a3024;"></div>
<div class="t" style="left:25px;top:798px;height:20px;line-height:20px;color:#6f737a;font-size:13px">getInputStream:131, StreamRemoteCall <i>(sun.rmi.transport)</i></div>
<div style="position:absolute;left:0px;top:819px;width:454px;height:24px;background:#43454a;"></div>
<svg style="position:absolute;left:7px;top:824px;" width="14" height="14" viewBox="0 0 14 14" fill="none"><path d="M4.5 2 L1.5 5 L4.5 8" stroke="#ced0d6" stroke-width="1.1"/><path d="M1.5 5 H8 A4 4 0 0 1 8 13 H5" stroke="#ced0d6" stroke-width="1.1"/></svg>
<div class="t" style="left:25px;top:822px;height:20px;line-height:20px;color:#dfe1e5;font-size:13px">dispatch:-1, RegistryImpl_Skel <i>(sun.rmi.registry)</i></div>
<div style="position:absolute;left:0px;top:843px;width:454px;height:5px;background:#3a3024;"></div>
<div style="position:absolute;left:446px;top:792px;width:8px;height:56px;background:rgba(255,255,255,0.14);"></div>
<svg style="position:absolute;left:473px;top:802px;" width="7" height="10" viewBox="0 0 7 10" fill="none"><path d="M1.5 1 L5.5 5 L1.5 9" stroke="#ced0d6" stroke-width="1.1"/></svg>
<svg style="position:absolute;left:489px;top:799px;" width="16" height="16" viewBox="0 0 16 16" fill="none"><rect x="3" y="1.5" width="10" height="3.5" rx="0.8" stroke="#e0a84e" stroke-width="1.1"/><rect x="3" y="6.3" width="10" height="3.5" rx="0.8" stroke="#e0a84e" stroke-width="1.1"/><rect x="3" y="11" width="10" height="3.5" rx="0.8" stroke="#e0a84e" stroke-width="1.1"/></svg>
<div class="t" style="left:508px;top:798.0px;height:20px;line-height:20px;color:#e0955f;font-size:13px;font-weight:normal;">this</div>
<div class="t" style="left:535px;top:798.0px;height:20px;line-height:20px;color:#dfe1e5;font-size:13px;font-weight:normal;">=</div>
<div class="t" style="left:548px;top:798.0px;height:20px;line-height:20px;color:#767a81;font-size:13px;font-weight:normal;letter-spacing:0.1px">{RegistryImpl_Skel@1219}</div>
<svg style="position:absolute;left:489px;top:823px;" width="15" height="15" viewBox="0 0 15 15" fill="none"><circle cx="7.5" cy="7.5" r="7" fill="#548af7"/><rect x="6.6" y="6.3" width="1.8" height="5" fill="#fff"/><circle cx="7.5" cy="4.2" r="1.1" fill="#fff"/></svg>
<div class="t" style="left:508px;top:822.0px;height:20px;line-height:20px;color:#dfe1e5;font-size:13px;font-weight:normal;">Variables debug info not available</div>
<svg style="position:absolute;left:0px;top:0px;pointer-events:none" width="1645" height="848" viewBox="0 0 1645 848" fill="none"><path d="M363.4 746.4 L279.2 816.2 L277.3 812.2 L272.8 825.2 L286.4 822.6 L282.6 820.8 L364.6 747.6 Z" fill="#f41c1c"/></svg>
</body></html>
